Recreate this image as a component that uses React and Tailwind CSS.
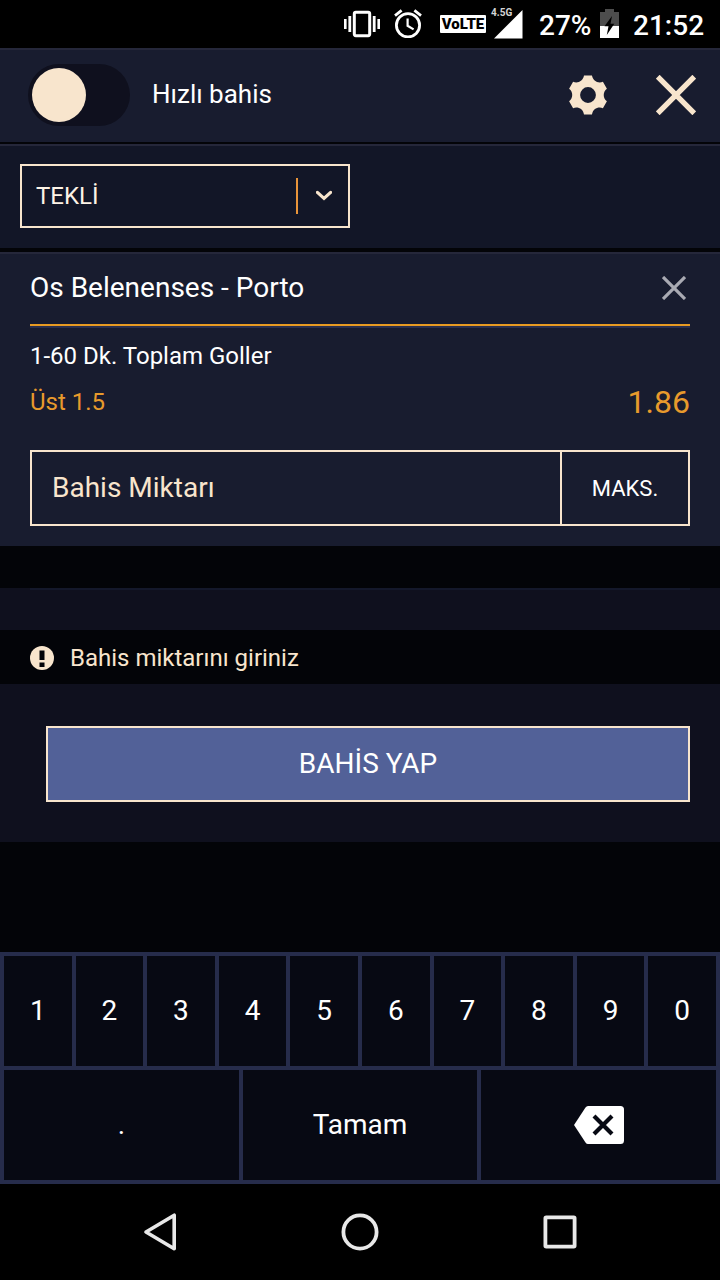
import { useState } from "react";

const DIGITS = ["1", "2", "3", "4", "5", "6", "7", "8", "9", "0"];

function StatusBar() {
  return (
    <div className="flex h-12 items-start bg-black pl-[344px] text-white">
      <svg className="mt-[10px] h-7 w-9 shrink-0" viewBox="0 0 36 28" fill="none" stroke="currentColor">
        <rect x="10.3" y="2.3" width="15.4" height="23.4" rx="1.6" strokeWidth="3" />
        <path d="M5.8 6v16M30.2 6v16" strokeWidth="2.8" />
        <path d="M1.3 9v10M34.7 9v10" strokeWidth="2.6" />
      </svg>
      <svg className="mt-[9px] ml-[14px] h-[29px] w-7 shrink-0" viewBox="0 0 28 29" fill="none" stroke="currentColor">
        <circle cx="14" cy="16.3" r="11.6" strokeWidth="2.8" />
        <path d="M13.6 9.5v7.3l6 3.6" strokeWidth="2.2" />
        <path d="M1 6.6L7.6 1.4M27 6.6L20.4 1.4" strokeWidth="2.8" />
      </svg>
      <div className="mt-[15px] ml-[18px] flex h-[18px] w-[46px] shrink-0 items-center justify-center rounded-[1px] bg-white pt-px text-[15px] font-black leading-none text-black">
        VoLTE
      </div>
      <div className="relative mt-[10px] ml-[6px] h-[29px] w-[31px] shrink-0">
        <span className="absolute -top-[3px] -left-px text-[10px] font-bold leading-[12px] text-neutral-300">4.5G</span>
        <svg className="h-full w-full" viewBox="0 0 31 29" fill="currentColor">
          <path d="M30.5 0v28.5H2z" />
        </svg>
      </div>
      <span className="mt-[10px] ml-4 w-[52px] text-[28px] font-medium leading-8">27%</span>
      <svg className="mt-[9px] ml-[9px] h-[29px] w-[19px] shrink-0" viewBox="0 0 19 29">
        <path d="M5 0h9v3h5v14H0V3h5z" fill="#4d4d4d" />
        <path d="M0 17h19v12H0z" fill="#fff" />
        <path d="M12 7L4.5 17.3h4L6.8 26 14.3 14.7h-3.8z" fill="#000" />
      </svg>
      <span className="mt-[10px] ml-[14px] text-[28px] font-medium leading-8">21:52</span>
    </div>
  );
}

function GearIcon() {
  return (
    <svg className="h-10 w-10" viewBox="-20 -20 40 40" fill="currentColor">
      <path
        fillRule="evenodd"
        d="M-4-19.5H4C4.8-14.2 9.9-11.3 14.9-13.2L18.9-6.3C14.7-3.1 14.7 3.1 18.9 6.3L14.9 13.2C9.9 11.3 4.8 14.2 4 19.5H-4C-4.8 14.2-9.9 11.3-14.9 13.2L-18.9 6.3C-14.7 3.1-14.7-3.1-18.9-6.3L-14.9-13.2C-9.9-11.3-4.8-14.2-4-19.5ZM0-7.9A7.9 7.9 0 1 0 0 7.9A7.9 7.9 0 1 0 0-7.9Z"
      />
    </svg>
  );
}

function Header({ quickBet, onToggle }) {
  return (
    <div className="flex h-[94px] items-center border-t-2 border-[#25273a] bg-[#181c2f] pr-6 pb-0.5 pl-7">
      <button onClick={onToggle} className="flex h-[62px] w-[102px] items-center rounded-full bg-[#0f101e] px-1">
        <span className={quickBet ? "ml-10 size-[54px] rounded-full bg-[#f8e5cd]" : "size-[54px] rounded-full bg-[#f8e5cd]"} />
      </button>
      <span className="ml-[22px] pb-0.5 text-[26px] leading-8 text-white">Hızlı bahis</span>
      <button className="ml-auto text-[#f8e5cd]">
        <GearIcon />
      </button>
      <button className="ml-12 text-[#f8e5cd]">
        <svg className="h-10 w-10" viewBox="0 0 40 40" fill="none" stroke="currentColor" strokeWidth="5.4">
          <path d="M1.7 1.7L38.3 38.3M38.3 1.7L1.7 38.3" />
        </svg>
      </button>
    </div>
  );
}

function BetTypeBar() {
  return (
    <div className="mt-0.5 h-[104px] border-t-2 border-[#25273a] bg-[#121627] px-5 pt-[18px]">
      <button className="flex h-16 w-[330px] items-center border-2 border-[#f8e5cd] pr-4 pl-[14px]">
        <span className="text-2xl text-[#fdf3e6]">TEKLİ</span>
        <span className="ml-auto h-9 w-0.5 bg-[#e8943a]" />
        <svg className="ml-[18px] h-3 w-4 text-[#f8e5cd]" viewBox="0 0 16 12" fill="none" stroke="currentColor" strokeWidth="3.2">
          <path d="M1.4 2.4L8 8.4L14.6 2.4" strokeLinecap="round" />
        </svg>
      </button>
    </div>
  );
}

function BetCard({ stake }) {
  return (
    <div className="mt-1 h-[294px] border-t-2 border-[#25273a] bg-[#181c2f] px-[30px]">
      <div className="flex h-[70px] items-center justify-between pr-1 pb-0.5">
        <span className="text-[28px] text-white">Os Belenenses - Porto</span>
        <svg className="h-6 w-6 text-[#a9aab3]" viewBox="0 0 24 24" fill="none" stroke="currentColor" strokeWidth="3.2">
          <path d="M1 1L23 23M23 1L1 23" />
        </svg>
      </div>
      <div className="h-1 border-b-2 border-[#2a2f4d] bg-[#e89a22]" />
      <div className="mt-3 text-2xl leading-8 text-white">1-60 Dk. Toplam Goller</div>
      <div className="mt-2 flex h-11 items-center justify-between text-[#e89a2c]">
        <span className="text-2xl">Üst 1.5</span>
        <span className="text-[32px]">1.86</span>
      </div>
      <div className="mt-[26px] flex h-[76px] border-2 border-[#f8e5cd]">
        <div className="flex flex-1 items-center pl-5 text-[28px] text-[#f8e5cd]">{stake || "Bahis Miktarı"}</div>
        <button className="w-32 border-l-2 border-[#f8e5cd] text-[22px] text-white">MAKS.</button>
      </div>
    </div>
  );
}

function Keypad({ onKey, onDelete }) {
  return (
    <div className="flex h-[232px] flex-col gap-1 bg-[#262c4b] p-1 text-[28px] text-white">
      <div className="flex flex-1 gap-1">
        {DIGITS.map((digit) => (
          <button key={digit} onClick={() => onKey(digit)} className="flex-1 bg-[#070913]">
            {digit}
          </button>
        ))}
      </div>
      <div className="grid flex-1 grid-cols-3 gap-1">
        <button onClick={() => onKey(".")} className="bg-[#070913]">.</button>
        <button className="bg-[#070913]">Tamam</button>
        <button onClick={onDelete} className="flex items-center justify-center bg-[#070913]">
          <svg className="h-[38px] w-[50px]" viewBox="0 0 50 38">
            <path d="M14 0H46.5Q50 0 50 3.5V34.5Q50 38 46.5 38H14Q12.5 38 11.5 36.5L0 19L11.5 1.5Q12.5 0 14 0Z" fill="#fff" />
            <path d="M20 10L38 28M38 10L20 28" stroke="#070913" strokeWidth="4.2" />
          </svg>
        </button>
      </div>
    </div>
  );
}

function NavBar() {
  return (
    <div className="grid h-24 grid-cols-3 place-items-center bg-black px-[60px] text-[#e8e8e8]">
      <svg className="h-10 w-10" viewBox="0 0 40 40" fill="none" stroke="currentColor" strokeWidth="3.6" strokeLinejoin="round">
        <path d="M34.2 3.2V36.8L6 20Z" />
      </svg>
      <svg className="h-10 w-10" viewBox="0 0 40 40" fill="none" stroke="currentColor" strokeWidth="3.8">
        <circle cx="20" cy="20" r="16.6" />
      </svg>
      <svg className="h-10 w-10" viewBox="0 0 40 40" fill="none" stroke="currentColor" strokeWidth="3.8">
        <rect x="5.4" y="5.4" width="29.2" height="29.2" rx="0.8" />
      </svg>
    </div>
  );
}

export default function App() {
  const [quickBet, setQuickBet] = useState(false);
  const [stake, setStake] = useState("");

  return (
    <div className="h-[1280px] w-[720px] overflow-hidden bg-[#030408] font-[Roboto,sans-serif]">
      <StatusBar />
      <Header quickBet={quickBet} onToggle={() => setQuickBet(!quickBet)} />
      <BetTypeBar />
      <BetCard stake={stake} />
      <div className="mt-[42px] h-[42px] bg-[#0f101e] px-[30px]">
        <div className="h-0.5 bg-[#14182b]" />
      </div>
      <div className="flex h-[54px] items-center gap-4 px-[30px] pt-0.5 text-[#f8e5cd]">
        <svg className="h-6 w-6" viewBox="0 0 24 24">
          <circle cx="12" cy="12" r="12" fill="currentColor" />
          <path d="M9.5 4.5h5v9.5h-5zM9.5 16.5h5v4.5h-5z" fill="#030408" />
        </svg>
        <span className="text-2xl">Bahis miktarını giriniz</span>
      </div>
      <div className="h-[158px] bg-[#0f101e] pt-[42px] pr-[30px] pl-[46px]">
        <button className="h-[76px] w-full border-2 border-[#f8e5cd] bg-[#526198] text-[28px] text-white">BAHİS YAP</button>
      </div>
      <div className="mt-[110px]">
        <Keypad onKey={(key) => setStake(stake + key)} onDelete={() => setStake(stake.slice(0, -1))} />
      </div>
      <NavBar />
    </div>
  );
}
